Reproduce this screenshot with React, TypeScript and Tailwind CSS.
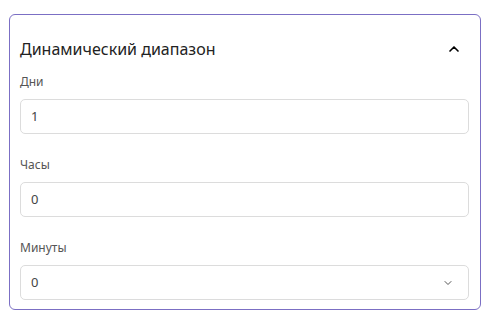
import { ChevronDown, ChevronUp } from "lucide-react";

function Field(props: { label: string; value: string; select?: boolean; className?: string }) {
  return (
    <div className={props.className}>
      <div className="text-[12px] leading-4 text-[#555]">{props.label}</div>
      <div className="mt-[9px] flex h-[35px] items-center justify-between rounded-[5px] border border-[#dcdcdc] pl-[10px] pr-[14px] text-[13px] text-[#444]">
        <span>{props.value}</span>
        {props.select ? <ChevronDown className="h-3 w-3 text-[#555]" strokeWidth={2} /> : null}
      </div>
    </div>
  );
}

export default function App() {
  return (
    <div className="min-h-[321px] bg-white pl-[9px] pt-[14px] font-['Noto_Sans',sans-serif]">
      <div className="h-[296px] w-[472px] rounded-md border border-[#7b6fc4] pl-[10px] pr-[11px]">
        <div className="flex items-center justify-between pt-[22px]">
          <h2 className="text-[16px] leading-6 text-[#222]">Динамический диапазон</h2>
          <ChevronUp className="mr-[7px] h-4 w-4 text-black" strokeWidth={2.5} />
        </div>
        <Field className="mt-[13px]" label="Дни" value="1" />
        <Field className="mt-[23px]" label="Часы" value="0" />
        <Field className="mt-[23px]" label="Минуты" value="0" select />
      </div>
    </div>
  );
}
